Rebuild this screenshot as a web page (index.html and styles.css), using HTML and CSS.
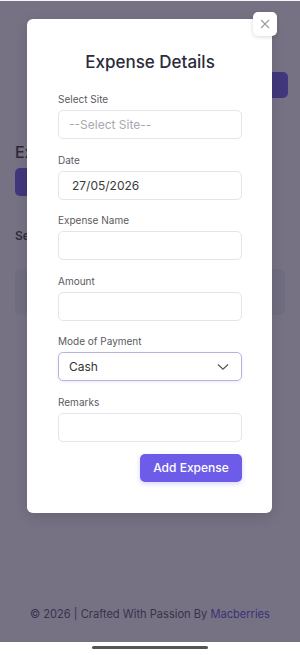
FILE: index.html
```html
<!DOCTYPE html>
<html lang="en">
<head>
    <meta charset="UTF-8">
    <meta name="viewport" content="width=device-width, initial-scale=1.0">
    <title>Expenses</title>
    <link rel="stylesheet" href="styles.css">
</head>
<body>

    <div class="screen">
        <!-- page behind the modal -->
        <div class="page">
            <div class="topbar">
                <a class="btn-top">Add</a>
            </div>
            <h2 class="page-title">Ex</h2>
            <div class="tab-btn">All</div>
            <div class="section-label">Se</div>
            <div class="list-card"></div>
            <div class="footer">
                &copy; 2026 | Crafted With Passion By <span class="brand">Macberries</span>
            </div>
        </div>

        <div class="overlay">
            <div class="modal">
                <button class="close" aria-label="Close">
                    <svg width="10" height="10" viewBox="0 0 10 10">
                        <path d="M1 1 L9 9 M9 1 L1 9" stroke="#9a9aa2" stroke-width="1.1" fill="none"/>
                    </svg>
                </button>

                <h1 class="modal-title">Expense Details</h1>

                <div class="field">
                    <label>Select Site</label>
                    <div class="input placeholder">--Select Site--</div>
                </div>
                <div class="field">
                    <label>Date</label>
                    <div class="input date">27/05/2026</div>
                </div>
                <div class="field">
                    <label>Expense Name</label>
                    <div class="input"></div>
                </div>
                <div class="field">
                    <label>Amount</label>
                    <div class="input"></div>
                </div>
                <div class="field">
                    <label>Mode of Payment</label>
                    <div class="input select">
                        <span>Cash</span>
                        <svg width="12" height="8" viewBox="0 0 12 8">
                            <path d="M1 1.5 L6 6.2 L11 1.5" stroke="#555" stroke-width="1.2" fill="none"/>
                        </svg>
                    </div>
                </div>
                <div class="field last">
                    <label>Remarks</label>
                    <div class="input"></div>
                </div>

                <div class="actions">
                    <button class="btn-add">Add Expense</button>
                </div>
            </div>
        </div>
    </div>

    <div class="home-strip">
        <div class="home-bar"></div>
    </div>

</body>
</html>
```

FILE: styles.css
```css
body {
    font-family: Inter, "Noto Sans", sans-serif;
    margin: 0;
    padding: 0;
    background-color: #fff;
    width: 300px;
    height: 655px;
    overflow: hidden;
}
.screen {
    position: relative;
    height: 642px;
    overflow: hidden;
}

/* page behind */
.page {
    height: 642px;
    background: #f7f7fb;
    padding: 0 15px;
    box-sizing: border-box;
    display: flex;
    flex-direction: column;
}
.topbar {
    display: flex;
    justify-content: flex-end;
    padding-top: 72px;
}
.btn-top {
    display: block;
    width: 60px;
    height: 26px;
    border-radius: 5px;
    background: #6c5ce7;
    margin-right: -3px;
}
.page-title {
    font-size: 16px;
    font-weight: 500;
    color: #333;
    margin: 44px 0 0;
    line-height: 20px;
}
.tab-btn {
    margin-top: 6px;
    width: 90px;
    height: 28px;
    border-radius: 5px;
    background: #6c5ce7;
    color: transparent;
}
.section-label {
    margin-top: 32px;
    font-size: 12px;
    font-weight: 600;
    color: #444;
}
.list-card {
    margin-top: 26px;
    height: 46px;
    border-radius: 6px;
    background: #e6e9f2;
}
.footer {
    margin-top: auto;
    margin-bottom: 21px;
    text-align: center;
    font-size: 11.1px;
    color: #55516a;
    white-space: nowrap;
}
.brand {
    color: #5b4fd6;
}

/* overlay + modal */
.overlay {
    position: absolute;
    top: 1px;
    left: 0;
    right: 0;
    bottom: 0;
    background: rgba(38, 32, 58, 0.62);
    padding: 18px 28px 0 27px;
}
.modal {
    position: relative;
    background: #fff;
    border-radius: 6px;
    padding: 32px 30px 31px 31px;
    box-shadow: 0 4px 14px rgba(0, 0, 0, 0.12);
}
.close {
    position: absolute;
    top: -7px;
    right: -5px;
    width: 24px;
    height: 24px;
    border: none;
    border-radius: 5px;
    background: #fff;
    box-shadow: 0 1px 4px rgba(0, 0, 0, 0.15);
    display: flex;
    align-items: center;
    justify-content: center;
    padding: 0;
}
.modal-title {
    text-align: center;
    font-size: 17px;
    font-weight: 500;
    color: #2b2b3a;
    line-height: 22px;
    margin: 0 0 19px;
}
.field {
    margin-bottom: 13.6px;
}
.field.last {
    margin-bottom: 12px;
}
.field label {
    display: block;
    font-size: 10px;
    line-height: 14px;
    color: #5a5a60;
    margin-bottom: 4px;
}
.input {
    height: 29px;
    box-sizing: border-box;
    border: 1px solid #e4e4ea;
    border-radius: 5px;
    padding: 0 10px;
    font-size: 12px;
    color: #333;
    display: flex;
    align-items: center;
}
.placeholder {
    color: #a8a8b0;
}
.date {
    padding-left: 13px;
    color: #3a3a3a;
}
.select {
    border-color: #b9b4dc;
    box-shadow: 0 1px 3px rgba(108, 92, 231, 0.15);
    justify-content: space-between;
    padding-right: 12px;
}
.actions {
    display: flex;
    justify-content: flex-end;
}
.btn-add {
    width: 102px;
    height: 28px;
    border: none;
    border-radius: 5px;
    background: #6c5ce7;
    color: #fff;
    font-family: Inter, "Noto Sans", sans-serif;
    font-size: 12px;
    font-weight: 500;
    box-shadow: 0 2px 5px rgba(108, 92, 231, 0.25);
}

/* bottom home indicator */
.home-strip {
    height: 13px;
    background: #fff;
    display: flex;
    justify-content: center;
    padding-top: 4px;
    box-sizing: border-box;
}
.home-bar {
    width: 116px;
    height: 3px;
    border-radius: 2px;
    background: #555;
}
```
